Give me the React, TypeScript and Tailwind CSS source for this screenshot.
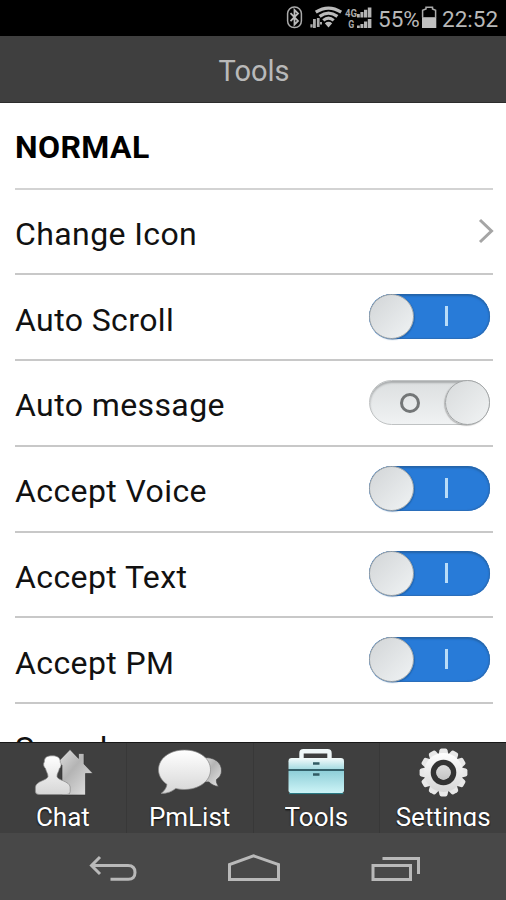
import type { ReactNode } from "react";

const StatusBar = () => (
  <div className="flex h-9 shrink-0 items-center bg-black pl-[286px] text-[22.5px] text-[#b8b8b8]">
    <svg width="90" height="36" viewBox="286 0 90 36" className="shrink-0">
      <rect x="287.6" y="7" width="13.8" height="20.6" rx="6.6" fill="none" stroke="#aaa" strokeWidth="1.5" />
      <path d="M290.5 13.2L298 21L294.5 24.6V10L298 13.4L290.5 21.2" fill="none" stroke="#bbb" strokeWidth="1.8" />
      <g fill="none" stroke="#bbb" strokeWidth="3.2">
        <path d="M315.8 12.2Q328.5 4 341.2 12.2" />
        <path d="M319.6 16.4Q328.5 9.8 337.4 16.4" />
        <path d="M323.3 20.4Q328.5 16 333.7 20.4" />
      </g>
      <path d="M324.8 23.2Q328.5 20.4 332.2 23.2L328.5 27.6Z" fill="#bbb" />
      <path d="M310.4 24.2H312.6V27.6H310.4ZM313 19H315.8V28H313ZM316.9 18H319.6V27H316.9ZM320 22H322V24.5H320Z" fill="#aaa" />
      <text x="345" y="17.4" fontSize="10" fontWeight="bold" textLength="12" lengthAdjust="spacingAndGlyphs" fill="#aaa">4G</text>
      <text x="348.2" y="28" fontSize="10" fontWeight="bold" textLength="6" lengthAdjust="spacingAndGlyphs" fill="#aaa">G</text>
      <path d="M357 14H359.8V17.5H357ZM360.4 12H363.4V17.5H360.4ZM364 9.8H367.2V17.5H364ZM367.8 7.6H371.4V17.5H367.8Z" fill="#b5b5b5" />
      <path d="M357 25.5H359.8V28H357ZM360.4 24H363.4V28H360.4ZM364 21.4H367.2V28H364ZM367.8 19H371.4V28H367.8Z" fill="#b5b5b5" />
    </svg>
    <span className="w-[45px] shrink-0 pl-[2px] pt-[3px]">55%</span>
    <svg width="17" height="36" viewBox="420 0 17 36" className="shrink-0">
      <path d="M421.6 17.5V10.2L425 9V7.2H431.5V9L434.6 10.2V17.5" fill="none" stroke="#aaa" strokeWidth="1.5" />
      <path d="M421 17.2H435.3V28H421Z" fill="#c0c0c0" />
    </svg>
    <span className="pl-[4px] pt-[3px]">22:52</span>
  </div>
);

const Toggle = ({ on }: { on: boolean }) =>
  on ? (
    <div className="relative h-[45px] w-[121px] rounded-full bg-[#287bd8] shadow-[inset_0_2px_2px_#2464a8,inset_-1px_-1px_1px_#2b6db9]">
      <div className="absolute left-0 top-0 size-[45px] rounded-full border border-[#a4a8a9] bg-gradient-to-br from-[#d2d5d7] to-[#f0f3f4] shadow-[1px_1px_1px_#1c559480]" />
      <div className="absolute left-[76px] top-[12px] h-5 w-[3px] bg-[#b9dcf8]" />
    </div>
  ) : (
    <div className="relative h-[45px] w-[121px] rounded-full border border-[#bfc2c3] bg-gradient-to-b from-[#dcdfe0] to-[#f0f2f3] shadow-[inset_0_2px_2px_#a9acad]">
      <div className="absolute -top-px right-[-1px] size-[45px] rounded-full border border-[#a4a7a8] bg-gradient-to-br from-[#d8dbdc] to-[#f1f3f4] shadow-[-1px_1px_1px_#8888]" />
      <div className="absolute left-[30px] top-[12px] size-5 rounded-full border-[3px] border-[#737677]" />
    </div>
  );

const Row = ({ label, children }: { label: string; children?: ReactNode }) => (
  <div className="flex h-[85.75px] shrink-0 items-center justify-between border-b-2 border-[#c8c8c8]">
    <span className="pt-[5px] text-[32px] leading-none tracking-[0.4px] text-[#111]">{label}</span>
    {children}
  </div>
);

const Tab = ({ label, icon }: { label: string; icon: ReactNode }) => (
  <div className="flex flex-1 flex-col items-center border-r border-[#383838] text-white last:border-r-0">
    <svg width="72" height="58" viewBox="0 1 72 58" className="shrink-0">
      {icon}
    </svg>
    {/* fixed height cuts the descenders off */}
    <div className="h-[25px] overflow-hidden whitespace-nowrap text-[26px] leading-[32px] [text-shadow:0_1px_2px_#000]">
      {label}
    </div>
  </div>
);

const teeth = Array.from({ length: 12 }, (_, i) => i * 30);

const ChatIcon = (
  <>
    <path d="M28 23L43 7.5L51.500 16.4V11.5H57V22L66 31.5H58.5V53H35V23Z" fill="url(#house)" stroke="#2c2c2c" strokeWidth=".6" />
    <path d="M17.3 20C17.3 15 20.5 13.8 25.5 13.8S33.5 16 33.3 20.5C34.8 21.5 34 25.5 32.4 26.5C31.8 30 29.8 31.5 30 34.5C30.5 38.5 42.5 39 43.2 45V49.5Q43.2 52.5 40 52.5H12Q8.4 52.5 8.4 49.5V45C9 39 20.3 38.5 21 34.5C21 31.5 19.3 30 18.5 26.5C16.5 25 16 21.5 17.3 20Z" fill="url(#silver)" stroke="#888" strokeWidth=".7" />
  </>
);

const PmIcon = (
  <g transform="translate(-1 0)">
    <path d="M50 16C61 14 69 21 68.5 29C68.5 33 66 36 63.5 37.5C63 40 64 42 65.5 44.5C61 44 58.5 42.5 56 40H46Z" fill="url(#house)" stroke="#444" strokeWidth=".7" />
    <path d="M31.5 8C46.5 8 57.5 16.5 57.5 27.8C57.5 39.5 45.5 47.5 31.5 47.5C28.5 47.5 25.5 47.2 22.8 46.4C19 49.5 14.5 51.5 8 51.5C11.5 49 13.5 45.5 14 42.4C9 39 5.5 33.8 5.5 27.8C5.5 16.5 16.5 8 31.5 8Z" fill="url(#silver)" stroke="#888" strokeWidth=".7" />
  </g>
);

const ToolsIcon = (
  <>
    <path d="M21.5 18V11.2Q21.5 9.3 23.5 9.3H47.5Q49.5 9.3 49.5 11.2V18" fill="none" stroke="#eff7f8" strokeWidth="4.4" />
    <path d="M8.5 26.9V19.2Q8.5 16 11.7 16H60.8Q64 16 64 19.2V26.9Z" fill="url(#lid)" />
    <path d="M8.5 26.9H64V29H8.5Z" fill="#34616a" />
    <path d="M8.5 29H64V48.2Q64 51 61 51H11.5Q8.5 51 8.5 48.2Z" fill="url(#box)" />
    <path d="M9 51.6H63.5" stroke="#287f8a" />
    <path d="M33 21.5H39.5M33 32.5H39.5" stroke="#315b63" strokeWidth="2.4" />
  </>
);

const GearIcon = (
  <g transform="translate(36.5 30.5)">
    {teeth.map((a) => (
      <path key={a} d="M-5.2 -17L-4 -22.3Q-3.6 -23.9 -2 -23.9H2Q3.6 -23.9 4 -22.3L5.2 -17Z" fill="#e8e8e8" transform={`rotate(${a})`} />
    ))}
    <circle r="19.5" fill="url(#silver)" />
    <circle r="10" fill="#d6d6d6" stroke="#333" strokeWidth="5.6" />
    <circle r="7.2" fill="url(#hub)" />
  </g>
);

const settings = [
  { label: "Auto Scroll", on: true },
  { label: "Auto message", on: false },
  { label: "Accept Voice", on: true },
  { label: "Accept Text", on: true },
  { label: "Accept PM", on: true },
];

export default function App() {
  return (
    <div className="flex h-[900px] w-[506px] flex-col overflow-hidden bg-white font-[Roboto,sans-serif]">
      <svg width="0" height="0" className="absolute">
        <defs>
          <linearGradient id="silver" x1="0" y1="0" x2="0" y2="1">
            <stop stopColor="#fff" />
            <stop offset="1" stopColor="#d6d6d6" />
          </linearGradient>
          <linearGradient id="house" x1="0" y1="0" x2="1" y2="1">
            <stop stopColor="#e6e6e6" />
            <stop offset=".45" stopColor="#b4b4b4" />
            <stop offset="1" stopColor="#e6e6e6" />
          </linearGradient>
          <linearGradient id="hub" x1="0" y1="0" x2="0" y2="1">
            <stop stopColor="#ddd" />
            <stop offset="1" stopColor="#c4c4c4" />
          </linearGradient>
          <linearGradient id="lid" x1="0" y1="0" x2="0" y2="1">
            <stop stopColor="#f4fbfb" />
            <stop offset="1" stopColor="#a7dce2" />
          </linearGradient>
          <linearGradient id="box" x1="0" y1="0" x2="0" y2="1">
            <stop stopColor="#8fcfd8" />
            <stop offset="1" stopColor="#cdf4f7" />
          </linearGradient>
        </defs>
      </svg>

      <StatusBar />
      <header className="flex h-[67px] shrink-0 items-center justify-center border-b border-[#2c2c2c] bg-[#3f3f3f] pt-[6px] pl-[2px] text-[29px] text-[#b9b9b9]">
        Tools
      </header>

      <main className="flex min-h-0 flex-1 flex-col overflow-hidden pr-[13px] pl-[15px]">
        <div className="flex h-[86.5px] shrink-0 items-center border-b-2 border-[#d3d3d3] pt-1 text-[32px] font-bold tracking-[0.4px] text-black">
          NORMAL
        </div>
        <Row label="Change Icon">
          <svg width="16" height="26" viewBox="0 0 16 26" fill="none" stroke="#a5a5a5" strokeWidth="3" className="mr-[-1px]">
            <path d="M2 2L13.5 13L2 24" />
          </svg>
        </Row>
        {settings.map((s) => (
          <Row key={s.label} label={s.label}>
            <div className="mr-[3px] mb-[1px]">
              <Toggle on={s.on} />
            </div>
          </Row>
        ))}
        <Row label="Sound" />
      </main>

      <nav className="flex h-[91px] shrink-0 border-t border-[#181818] bg-[#3f3f3f]">
        <Tab label="Chat" icon={ChatIcon} />
        <Tab label="PmList" icon={PmIcon} />
        <Tab label="Tools" icon={ToolsIcon} />
        <Tab label="Settings" icon={GearIcon} />
      </nav>

      <footer className="h-[67px] shrink-0 bg-[#484848]">
        <svg width="506" height="67" viewBox="0 833 506 67" fill="none" stroke="#b9b9b9" strokeWidth="3">
          <path d="M100 857L91.5 865.5L100 874M92 865.5H128Q135 865.5 135 872.5T128 879.3H110.5" />
          <path d="M229.5 879.5V864.5L253.5 855.8L278.5 864.5V879.5Z" />
          <path d="M373 865.5H410.5V879.5H373ZM382.5 858.5H418.5V874" />
        </svg>
      </footer>
    </div>
  );
}
